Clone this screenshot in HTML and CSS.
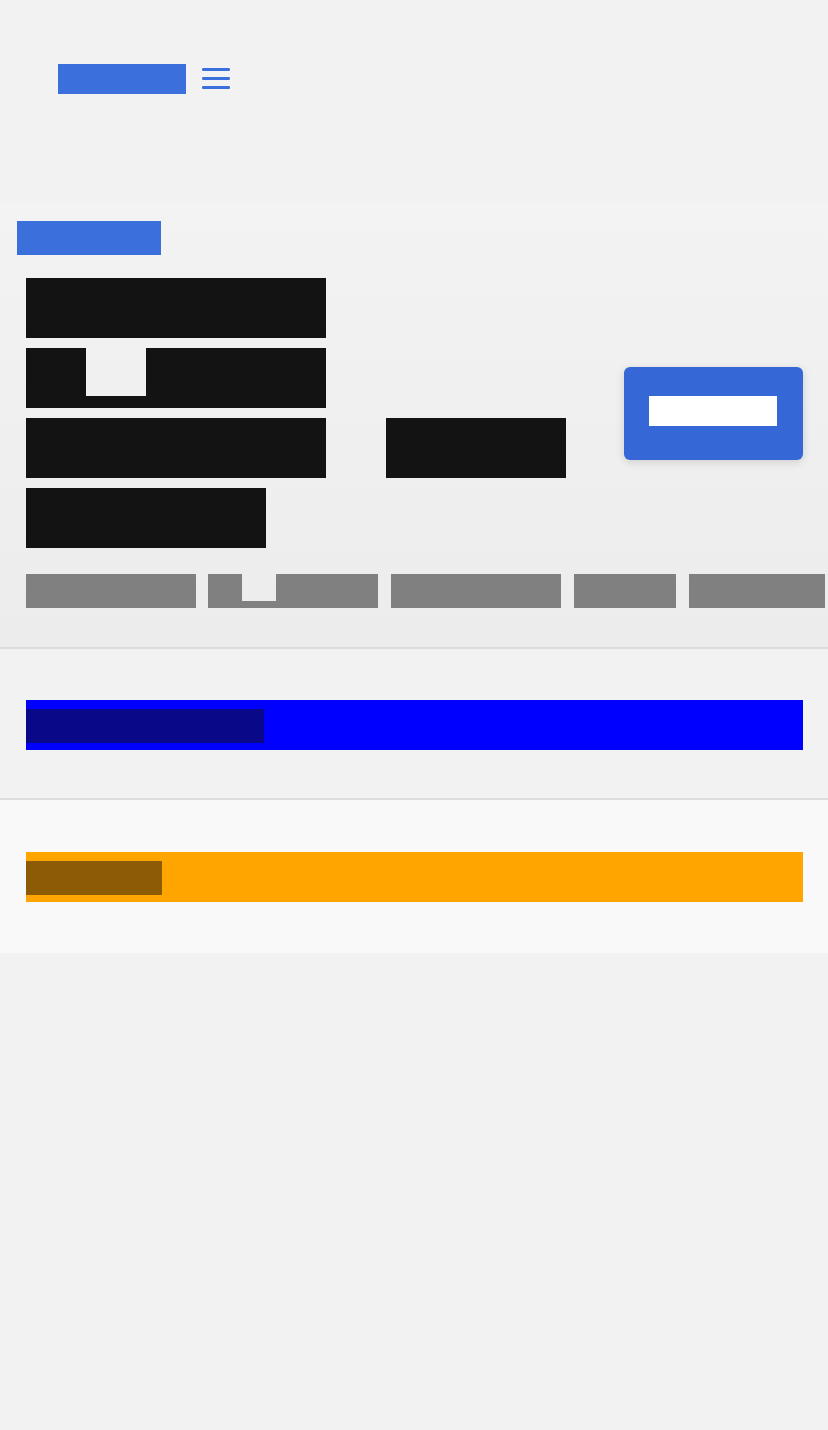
FILE: index.html
```html
<!doctype html>
<html lang="en-US">
  <head>
    <meta charset="utf-8">
    <meta name="viewport" content="width=device-width, initial-scale=1">
    <title>Landing</title>
    <link rel="stylesheet" href="styles.css">
  </head>
  <body>
    <header class="top">
      <a class="logo" href="#">Brandy</a>
      <svg class="menu" width="28" height="24" viewBox="0 0 28 24">
        <rect x="0" y="2" width="28" height="3" rx="1.2"/>
        <rect x="0" y="11" width="28" height="3" rx="1.2"/>
        <rect x="0" y="20" width="28" height="3" rx="1.2"/>
      </svg>
    </header>

    <section class="hero">
      <span class="tag">Newest</span>
      <div class="hero-row">
        <h1 class="title">
          <span class="line"><span class="g w5">Build</span></span>
          <span class="line"><span class="g w1">S</span><span class="g gp">p</span><span class="g w3">eed</span></span>
          <span class="line"><span class="g w5">Works</span><span class="g w3 sp">now</span></span>
          <span class="line"><span class="g w4">Fast</span></span>
        </h1>
        <a class="cta" href="#"><span class="cta-label">Start</span></a>
      </div>
      <ul class="meta">
        <li><span class="m w5s">Short</span></li>
        <li><span class="m w1s">S</span><span class="m ps">p</span><span class="m w3s">ark</span></li>
        <li><span class="m w5s">Cloud</span></li>
        <li><span class="m w3s">API</span></li>
        <li><span class="m w4s">Docs</span></li>
      </ul>
    </section>

    <section class="band band-info">
      <div class="bar bar-blue"><span class="bar-text info-text">Updated</span></div>
    </section>

    <section class="band band-warn">
      <div class="bar bar-orange"><span class="bar-text warn-text">Beta</span></div>
    </section>
  </body>
</html>
```

FILE: styles.css
```css
body {
  background-color: #f2f2f2;
  font-family: "Liberation Sans", Arial, sans-serif;
  margin: 0;
  min-height: 100vh;
  padding: 0;
}
/* header */
.top {
  align-items: flex-start;
  display: flex;
  gap: 16px;
  height: 139px;
  padding: 64px 0 0 58px;
}
.logo {
  background-color: #3b6fdc;
  color: #3b6fdc;
  display: block;
  font-size: 12px;
  height: 30px;
  line-height: 30px;
  overflow: hidden;
  text-decoration: none;
  width: 128px;
}
.menu {
  fill: #3b6fdc;
  margin-top: 2px;
}
/* hero */
.hero {
  background: linear-gradient(#f3f3f3, #ececec);
  border-bottom: 2px solid #dcdcdc;
  padding: 18px 25px 39px 17px;
}
.tag {
  background-color: #3b6fdc;
  color: #3b6fdc;
  display: block;
  font-size: 12px;
  height: 34px;
  line-height: 34px;
  overflow: hidden;
  width: 144px;
}
.hero-row {
  align-items: center;
  display: flex;
  justify-content: space-between;
  margin-top: 23px;
  padding-left: 9px;
}
.title {
  display: flex;
  flex-direction: column;
  font-size: 12px;
  font-weight: normal;
  gap: 10px;
  margin: 0;
}
.line {
  display: flex;
  height: 60px;
}
.g {
  background-color: #131313;
  color: #131313;
  display: block;
  height: 60px;
  line-height: 60px;
  overflow: hidden;
}
.w1 { width: 60px; }
.w3 { width: 180px; }
.w4 { width: 240px; }
.w5 { width: 300px; }
.sp { margin-left: 60px; }
.gp {
  background: linear-gradient(transparent 48px, #131313 48px);
  color: transparent;
  width: 60px;
}
.cta {
  background-color: #3667d6;
  border-radius: 6px;
  box-shadow: 0 2px 8px rgba(0, 0, 0, 0.14);
  display: block;
  padding: 29px 26px 34px 25px;
  text-decoration: none;
}
.cta-label {
  background-color: #fff;
  color: #fff;
  display: block;
  font-size: 12px;
  height: 30px;
  line-height: 30px;
  overflow: hidden;
  width: 128px;
}
.meta {
  display: flex;
  gap: 13px;
  list-style: none;
  margin: 26px 0 0;
  padding: 0 0 0 9px;
}
.meta li {
  display: flex;
  height: 34px;
}
.meta li:first-child {
  margin-right: -1px;
}
.m {
  background-color: #808080;
  color: #808080;
  display: block;
  font-size: 12px;
  height: 34px;
  line-height: 34px;
  overflow: hidden;
}
.w1s { width: 34px; }
.w3s { width: 102px; }
.w4s { width: 136px; }
.w5s { width: 170px; }
.ps {
  background: linear-gradient(transparent 27px, #808080 27px);
  color: transparent;
  width: 34px;
}
/* bands */
.band-info {
  border-bottom: 2px solid #dcdcdc;
  padding: 51px 25px 48px 26px;
}
.band-warn {
  background-color: #f9f9f9;
  padding: 52px 25px 51px 26px;
}
.bar {
  padding: 9px 0 7px;
}
.bar-blue { background-color: #0000ff; }
.bar-orange { background-color: #ffa500; }
.bar-text {
  display: block;
  font-size: 12px;
  height: 34px;
  line-height: 34px;
  overflow: hidden;
}
.info-text {
  background-color: #080888;
  color: #080888;
  width: 238px;
}
.warn-text {
  background-color: #8b5b06;
  color: #8b5b06;
  width: 136px;
}
```
